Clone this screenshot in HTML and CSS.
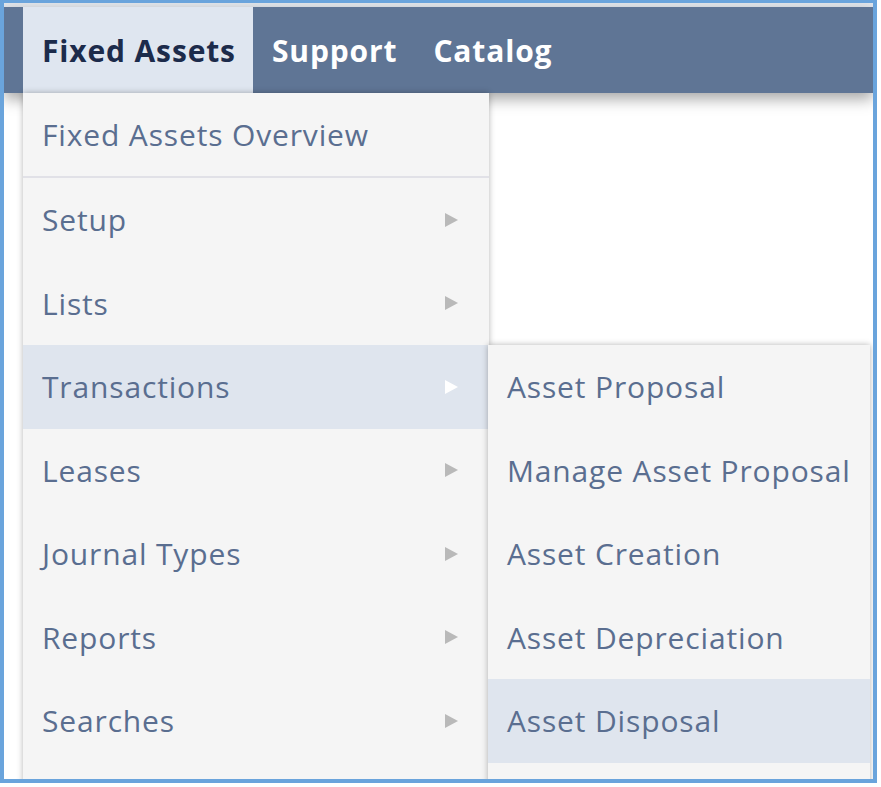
FILE: index.html
```html
<!DOCTYPE html>
<html>
<head>
<meta charset="utf-8">
<link rel="stylesheet" href="styles.css">
</head>
<body>
<div class="frame">
  <div class="topline"></div>
  <nav class="nav">
    <div class="nav-item active">Fixed Assets</div>
    <div class="nav-item">Support</div>
    <div class="nav-item">Catalog</div>
  </nav>
  <ul class="dropdown">
    <li class="overview">Fixed Assets Overview</li>
    <li class="item"><span>Setup</span><span class="arrow"></span></li>
    <li class="item"><span>Lists</span><span class="arrow"></span></li>
    <li class="item active"><span>Transactions</span><span class="arrow"></span>
      <ul class="submenu">
        <li class="sub-item">Asset Proposal</li>
        <li class="sub-item">Manage Asset Proposal</li>
        <li class="sub-item">Asset Creation</li>
        <li class="sub-item">Asset Depreciation</li>
        <li class="sub-item active">Asset Disposal</li>
      </ul>
    </li>
    <li class="item"><span>Leases</span><span class="arrow"></span></li>
    <li class="item"><span>Journal Types</span><span class="arrow"></span></li>
    <li class="item"><span>Reports</span><span class="arrow"></span></li>
    <li class="item"><span>Searches</span><span class="arrow"></span></li>
  </ul>
</div>
</body>
</html>
```
FILE: styles.css
```css
body {
  margin: 0;
  background: #fff;
  font-family: "Open Sans", "Noto Sans", sans-serif;
}

.frame {
  position: relative;
  width: 877px;
  height: 783px;
  box-sizing: border-box;
  border: 4px solid #6aa4dc;
  border-top-width: 3px;
  overflow: hidden;
  background: #fff;
}

.topline {
  height: 4px;
  background: #e4e8ee;
}

.nav {
  position: relative;
  z-index: 1;
  display: flex;
  height: 86px;
  padding-left: 19px;
  background: #5f7595;
  box-shadow: 0 6px 14px rgba(0, 0, 0, 0.35);
}

.nav-item {
  display: flex;
  align-items: center;
  padding: 0 17px 0 19px;
  color: #fff;
  font-size: 30px;
  font-weight: 700;
  letter-spacing: 0.85px;
}

.nav-item.active {
  width: 230px;
  box-sizing: border-box;
  background: #dfe6f0;
  color: #1c2b4b;
}

.dropdown {
  position: absolute;
  z-index: 2;
  left: 19px;
  top: 90px;
  width: 466px;
  height: 720px;
  margin: 0;
  padding: 0;
  list-style: none;
  background: #f5f5f5;
  box-shadow: 0 0 6px rgba(0, 0, 0, 0.3);
}

.overview,
.item,
.sub-item {
  font-size: 30px;
  letter-spacing: 0.85px;
  color: #5a6e90;
}

.overview {
  height: 83px;
  display: flex;
  align-items: center;
  padding-left: 19px;
  border-bottom: 2px solid #e1e1e7;
}

.item {
  position: relative;
  height: 83.5px;
  box-sizing: border-box;
  display: flex;
  align-items: center;
  justify-content: space-between;
  padding: 0 31px 0 19px;
}

.item.active {
  background: #dfe5ee;
}

.arrow {
  width: 0;
  height: 0;
  border-left: 13px solid #b9b9b9;
  border-top: 7px solid transparent;
  border-bottom: 7px solid transparent;
}

.item.active .arrow {
  border-left-color: #fff;
}

.submenu {
  position: absolute;
  left: 465px;
  top: 0;
  width: 382px;
  height: 460px;
  margin: 0;
  padding: 0;
  list-style: none;
  background: #f5f5f5;
  box-shadow: 0 0 6px rgba(0, 0, 0, 0.3);
}

.sub-item {
  height: 83.5px;
  display: flex;
  align-items: center;
  padding-left: 19px;
}

.sub-item.active {
  background: #dfe5ee;
}
```
